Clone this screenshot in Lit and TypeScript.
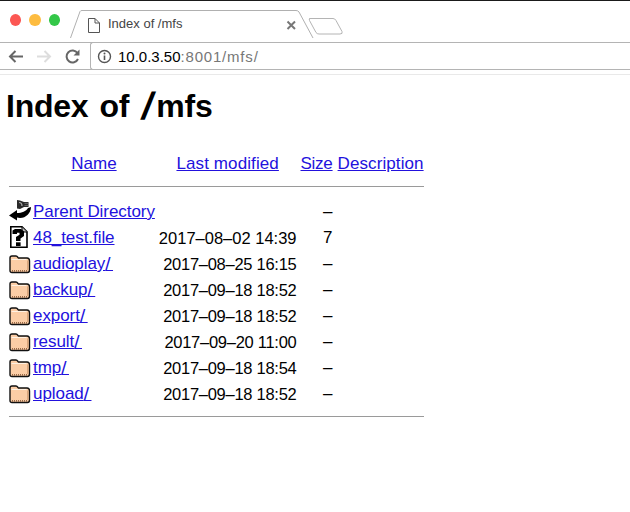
import { LitElement, html, css } from "lit";
import { customElement } from "lit/decorators.js";

const folder = html`<svg class="ic" width="22" height="22" viewBox="0 0 22 22">
  <path d="M1 6 Q1 4 3 4 H7 Q8 4 9 5.5 L9.5 6 H18 Q20.5 6 20.5 9 V18 Q20.5 20.5 18.5 20.5 H3 Q1 20.5 1 18.5 Z" fill="#fbcda6" stroke="#111" stroke-width="1.4"/>
  <path d="M2.5 7.5 H17.5" stroke="#fff1e2" stroke-width="1" fill="none"/>
  <path d="M18.8 8.5 V18" stroke="#d29d72" stroke-width="1.2" fill="none"/>
  <path d="M3 18.9 H19" stroke="#7a4a2a" stroke-width="1.3" stroke-dasharray="1 1" fill="none"/>
</svg>`;
const unknown = html`<svg class="ic" width="22" height="22" viewBox="0 0 22 22">
  <path d="M1.8 0.8 H13 L18 5.8 V21.2 H1.8 Z" fill="#fff" stroke="#000" stroke-width="1.6"/>
  <path d="M13 1 V6 H18" fill="#bbb" stroke="#000" stroke-width="1"/>
  <path d="M3.5 8 V4.5 L6 3 H12 L15 5.5 V10 L11.5 12.5 V15 H7 V11 L10.5 8.8 V6.8 H8 V8 Z" fill="#000"/>
  <rect x="7" y="16.3" width="4.6" height="3.7" fill="#000"/>
</svg>`;
const back = html`<svg class="ic" width="22" height="22" viewBox="0 0 22 22">
  <path d="M8 0 L11 0.5 L15 2 H19.5 V7 H15 L11 9 L8 8.5 Z" fill="#2a2a2a"/>
  <path d="M10 2.5 C12 2.5 13 4 13 6" stroke="#aaa" stroke-width="1.2" fill="none"/>
  <path d="M15.5 3.4 H19.5 M15.5 5.6 H19.5" stroke="#777" stroke-width="0.8" fill="none"/>
  <path d="M0 15.5 L8 10 V13 C13 13 17 11.5 19 8 L22 7 C22 13 17 18 11 18 L8 17.5 V20.5 Z" fill="#000"/>
</svg>`;

const rows = [
  { icon: back, name: "Parent Directory", dir: false, date: "", size: "–", tight: false },
  { icon: unknown, name: "48_test.file", dir: false, date: "2017–08–02 14:39", size: "7", tight: false },
  { icon: folder, name: "audioplay", dir: true, date: "2017–08–25 16:15", size: "–", tight: true },
  { icon: folder, name: "backup", dir: true, date: "2017–09–18 18:52", size: "–", tight: true },
  { icon: folder, name: "export", dir: true, date: "2017–09–18 18:52", size: "–", tight: true },
  { icon: folder, name: "result", dir: true, date: "2017–09–20 11:00", size: "–", tight: true },
  { icon: folder, name: "tmp", dir: true, date: "2017–09–18 18:54", size: "–", tight: true },
  { icon: folder, name: "upload", dir: true, date: "2017–09–18 18:52", size: "–", tight: true },
];

@customElement("app-root")
export class AppRoot extends LitElement {
  static styles = css`
    :host { display: block; width: 630px; height: 512px; overflow: hidden; background: #fff; font-family: "Liberation Sans", Arial, sans-serif; color: #000; }
    .topline { height: 1px; background: #1a1a1a; }
    .strip { height: 42px; display: flex; align-items: flex-start; box-sizing: border-box; border-bottom: 1px solid #b4b4b4; background: #fff; }
    .lights { display: flex; gap: 8px; padding: 13px 0 0 10px; width: 60px; box-sizing: border-box; }
    .dot { width: 12px; height: 12px; border-radius: 50%; }
    .r { background: #fc5753; } .y { background: #fdbc40; } .g { background: #33c748; }
    .tab { position: relative; width: 275px; height: 40px; margin: 1px 0 0 10px; flex: none; }
    .tab svg.shape { position: absolute; left: 0; top: 0; }
    .tab .title { position: absolute; left: 38px; top: 14px; font-size: 13px; color: #444; line-height: 16px; white-space: nowrap; }
    .toolbar { height: 27px; display: flex; align-items: flex-start; box-sizing: border-box; border-bottom: 1px solid #b4b4b4; }
    .nav { display: flex; width: 90px; height: 26px; align-items: center; flex: none; padding-left: 5px; box-sizing: border-box; }
    .nav svg { display: block; margin-right: 8px; flex: none; }
    .addr { display: flex; align-items: center; flex: 1; height: 28px; margin-top: -1px; border: 1px solid #b4b4b4; border-right: none; border-radius: 3px 0 0 3px; box-sizing: border-box; padding-left: 6px; font-size: 15px; color: #777; }
    .addr b { font-weight: 400; color: #000; }
    .addr svg { margin-right: 6px; flex: none; }
    .rest { letter-spacing: 0.8px; }
    .sep { height: 5px; background: #fff; border-bottom: 1px solid #e9e9e9; box-sizing: border-box; }
    main { padding: 0 6px; }
    h1 { font-size: 32px; font-weight: 700; margin: 0; padding-top: 13px; line-height: 37px; letter-spacing: -0.25px; word-spacing: 2.5px; }
    .h1sl { display: inline-block; width: 16px; font-size: 38px; line-height: 0; text-align: center; vertical-align: -2px; transform: skewX(-12deg); }
    table { border-collapse: separate; border-spacing: 0; margin-top: 25px; font-size: 17px; }
    td, th { padding: 2px 2px 0; height: 26px; line-height: 20px; white-space: nowrap; vertical-align: middle; box-sizing: border-box; }
    th { font-weight: 400; text-align: center; }
    a { color: #2211dd; text-decoration: underline; }
    .num { text-align: right; }
    td.icon, th.icon { width: 25px; padding: 0 0 0 3px; }
    .ic { display: block; }
    .name { letter-spacing: -0.06px; }
    .sl { font-size: 19px; line-height: 0; letter-spacing: 2.5px; vertical-align: -1px; }
    .date { font-size: 16.5px; }
    .tight { letter-spacing: -0.27px; }
    .lm { letter-spacing: 0.1px; }
    .sz { letter-spacing: -0.25px; }
    th.desc { padding-left: 3px; }
    .dsc { letter-spacing: 0.09px; }
    hr { border: 0; height: 1px; background: #9a9a9a; margin: 0; }
    td.hrc { height: 22px; padding: 10px 2px 0 3px; vertical-align: top; }
  `;

  render() {
    return html`
      <div class="topline"></div>
      <div class="strip">
        <div class="lights"><div class="dot r"></div><div class="dot y"></div><div class="dot g"></div></div>
        <div class="tab">
          <svg class="shape" width="275" height="40" viewBox="0 0 275 40" fill="none">
            <path d="M0.5 36 L10 9.5 Q10.5 8.5 12 8.5 H226 Q228 8.5 229 10 L243 36" stroke="#b0b0b0" stroke-width="1"/>
            <path d="M239.5 16.5 H263 Q265 16.5 266 18.5 L272 29.5 Q273 32 270 32 H249 Q247 32 246 30.5 L239.5 18.5 Q238.5 16.5 240.5 16.5 Z" stroke="#b4b4b4" fill="#fff"/>
            <path d="M18.5 16.5 H25 L29.5 21 V30.5 H18.5 Z M25 16.5 V21 H29.5" stroke="#555" stroke-width="1"/>
            <path d="M217.5 19.5 L225 27 M225 19.5 L217.5 27" stroke="#777" stroke-width="2"/>
          </svg>
          <span class="title">Index of /mfs</span>
        </div>
      </div>
      <div class="toolbar">
        <div class="nav">
          <svg width="20" height="20" viewBox="0 0 20 20" fill="none"><path d="M18 10.5 H5 M10.5 5 L5 10.5 L10.5 16" stroke="#666" stroke-width="2"/></svg>
          <svg width="20" height="20" viewBox="0 0 20 20" fill="none"><path d="M4 10.5 H17 M11.5 5 L17 10.5 L11.5 16" stroke="#ddd" stroke-width="2"/></svg>
          <svg width="20" height="20" viewBox="0 0 20 20" fill="none"><path d="M17 13 A6 6 0 1 1 16.5 7" stroke="#666" stroke-width="2"/><path d="M18.5 3.5 V9.5 H12.5 Z" fill="#666"/></svg>
        </div>
        <div class="addr">
          <svg width="15" height="15" viewBox="0 0 15 15" fill="none"><circle cx="7.5" cy="7.5" r="6" stroke="#555" stroke-width="1.4"/><path d="M7.5 6.5 V11" stroke="#555" stroke-width="1.6"/><circle cx="7.5" cy="4.5" r="1" fill="#555"/></svg>
          <span><b>10.0.3.50</b><span class="rest">:8001/mfs/</span></span>
        </div>
      </div>
      <div class="sep"></div>
      <main>
        <h1>Index of <span class="h1sl">/</span>mfs</h1>
        <table>
          <thead>
            <tr>
              <th class="icon"></th>
              <th><a href="#">Name</a></th>
              <th><a href="#" class="lm">Last modified</a></th>
              <th class="num"><a href="#" class="sz">Size</a></th>
              <th class="desc"><a href="#" class="dsc">Description</a></th>
            </tr>
            <tr><td class="hrc" colspan="5"><hr /></td></tr>
          </thead>
          <tbody>
            ${rows.map(
              (r) => html`<tr>
                <td class="icon">${r.icon}</td>
                <td><a href="#" class="name">${r.name}${r.dir ? html`<span class="sl">/</span>` : ""}</a></td>
                <td class="num date ${r.tight ? "tight" : ""}">${r.date}</td>
                <td class="num">${r.size}</td>
                <td></td>
              </tr>`
            )}
            <tr><td class="hrc" colspan="5"><hr /></td></tr>
          </tbody>
        </table>
      </main>
    `;
  }
}
